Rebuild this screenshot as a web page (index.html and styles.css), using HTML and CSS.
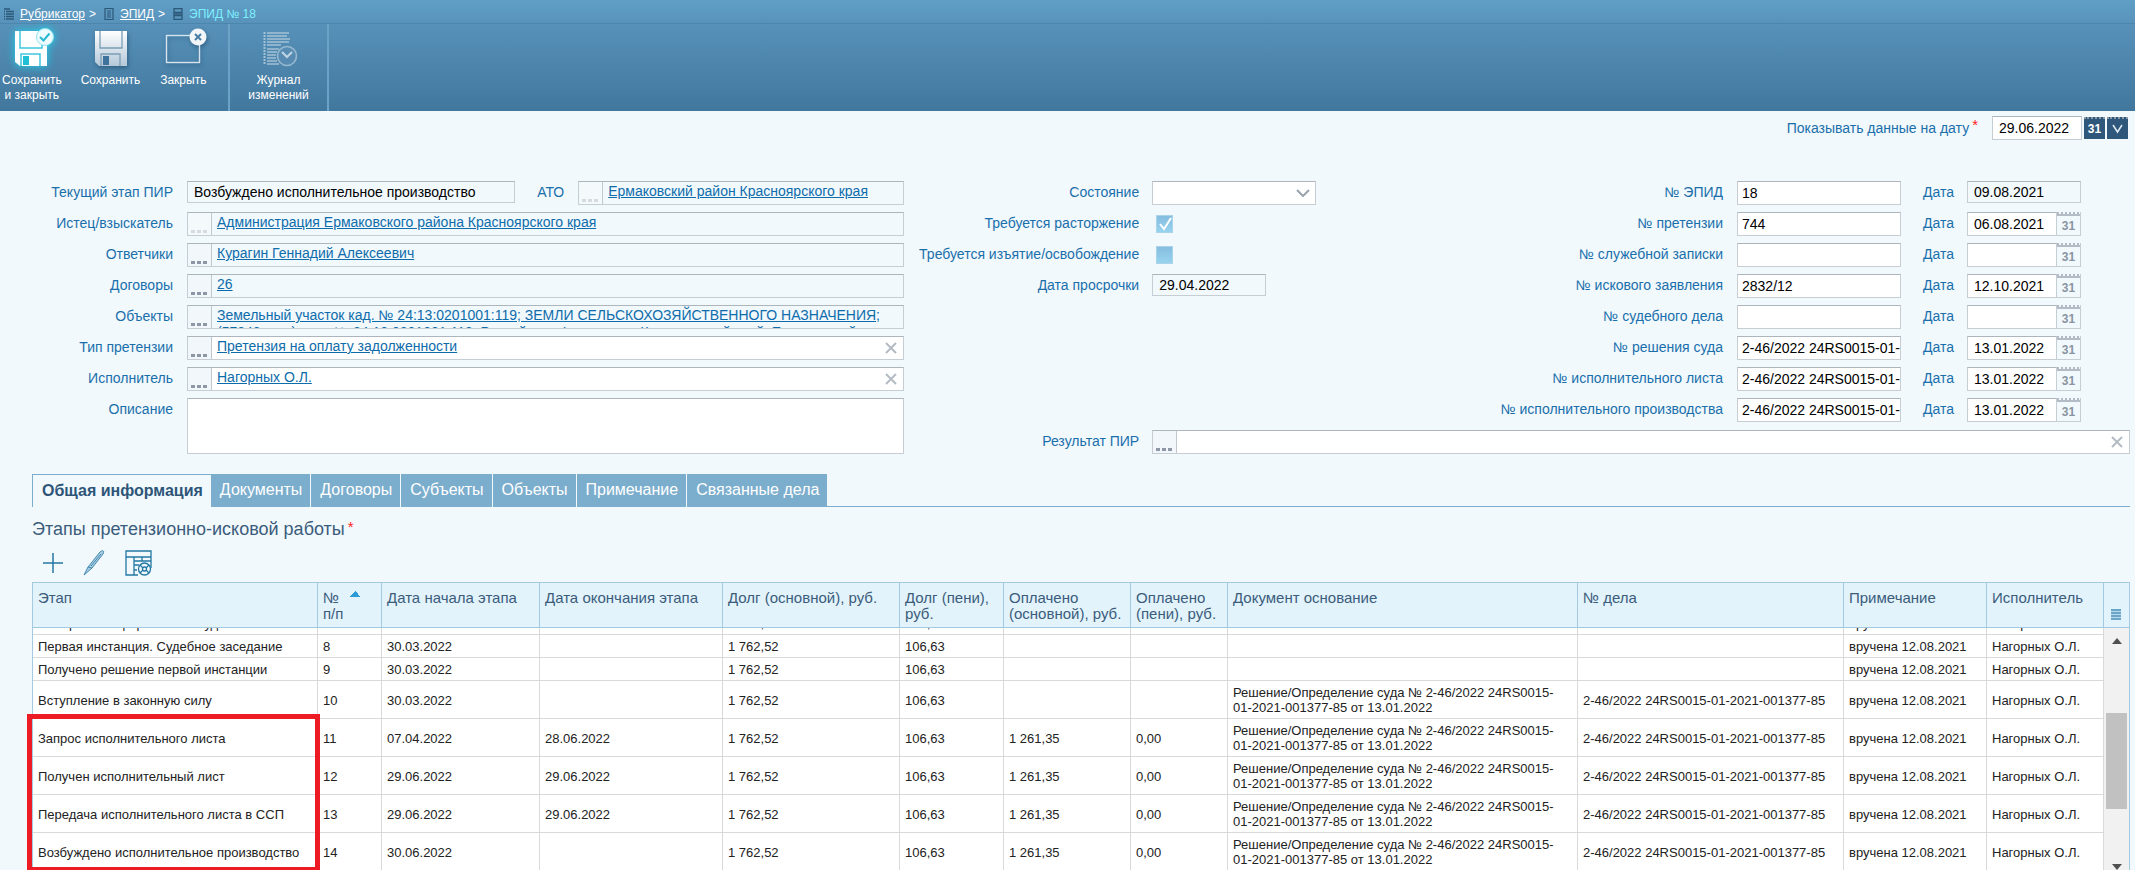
FILE: index.html
```html
<!DOCTYPE html>
<html lang="ru">
<head>
    <meta charset="UTF-8">
    <meta name="viewport" content="width=device-width, initial-scale=1.0">
    <title>ЭПИД № 18</title>
    <link rel="stylesheet" href="styles.css">
</head>
<body>
    <header class="header">
        <nav class="breadcrumbs">
            <svg width="10" height="12" viewBox="0 0 10 12"><path d="M0 1h6M2 3.5h8M2 6h8M2 8.5h8M2 11h8M0 3.5h1M0 6h1M0 8.5h1M0 11h1" stroke="#2c5878" stroke-width="1.4"/></svg>
            <a href="#">Рубрикатор</a><span class="sep">&gt;</span>
            <svg width="10" height="12" viewBox="0 0 10 12"><path d="M1 .5h8v11H1zM3 3h4M3 5h4M3 7h4M3 9h4" fill="none" stroke="#2c5878" stroke-width="1.2"/></svg>
            <a href="#">ЭПИД</a><span class="sep">&gt;</span>
            <svg width="10" height="12" viewBox="0 0 10 12"><path d="M1 .7h8v3.6H1zM0 6h10M1 7.7h8v3.6H1z" fill="none" stroke="#2c5878" stroke-width="1.3"/></svg>
            <span class="current">ЭПИД № 18</span>
        </nav>
        <div class="toolbar">
            <div class="tool-group">
                <button class="tool tool-glow">
                    <svg width="48" height="48" viewBox="0 0 48 48">
                        <path d="M7 6h32v35H12l-5-4z" fill="#fff"/>
                        <path d="M12 6v17h22V6" fill="none" stroke="#3fc6de" stroke-width="1.5"/>
                        <path d="M13 41V29h19v12" fill="none" stroke="#3fc6de" stroke-width="1.5"/>
                        <path d="M15 31h6v9h-6z" fill="#1fc0d4"/>
                        <circle cx="37" cy="12" r="8.5" fill="#eefbff" stroke="#8fe3f1"/>
                        <path d="M32 12l3.5 3.5 6-7" fill="none" stroke="#29b9d3" stroke-width="2"/>
                    </svg>
                    <span>Сохранить<br>и закрыть</span>
                </button>
                <button class="tool">
                    <svg width="48" height="48" viewBox="0 0 48 48">
                        <defs><linearGradient id="silver" x1="0" y1="0" x2="0" y2="1"><stop offset="0" stop-color="#fff"/><stop offset="1" stop-color="#b4c8d8"/></linearGradient></defs>
                        <path d="M9 6h32v35H13l-4-4z" fill="url(#silver)"/>
                        <path d="M14 6v17h22V6" fill="none" stroke="#7c9db6" stroke-width="1.3"/>
                        <path d="M15 41V29h19v12" fill="none" stroke="#7c9db6" stroke-width="1.3"/>
                        <path d="M17 31h6v9h-6z" fill="#3f729a"/>
                    </svg>
                    <span>Сохранить</span>
                </button>
                <button class="tool">
                    <svg width="48" height="48" viewBox="0 0 48 48">
                        <rect x="7.5" y="10.5" width="33" height="27" fill="none" stroke="#d5e4ee" stroke-width="1.4"/>
                        <circle cx="39" cy="12" r="8.5" fill="#f2f6f9"/>
                        <path d="M36 9l6 6M42 9l-6 6" stroke="#4a7da3" stroke-width="2"/>
                    </svg>
                    <span>Закрыть</span>
                </button>
            </div>
            <div class="tool-group">
                <button class="tool tool-flat">
                    <svg width="48" height="48" viewBox="0 0 48 48">
                        <path d="M12 8h22M12 11h20M12 14h23M12 17h22M12 20h14M12 24h12M12 27h10M12 30h9M12 33h9M12 36h10M12 39h12" stroke="#b9d0e0" stroke-width="1.4"/>
                        <path d="M9.5 7v33" stroke="#b9d0e0" stroke-width="2" stroke-dasharray="2 1"/>
                        <circle cx="32" cy="31" r="9.5" fill="#5a8db3" stroke="#a9c5d8" stroke-width="1.6"/>
                        <path d="M27 27l5 5 5-5" fill="none" stroke="#dbe8f0" stroke-width="2"/>
                    </svg>
                    <span>Журнал<br>изменений</span>
                </button>
            </div>
        </div>
    </header>

    <main>
        <div class="date-bar">
            <label for="onDate">Показывать данные на дату<sup>*</sup></label>
            <input id="onDate" class="input date-input" value="29.06.2022">
            <button class="dark-btn">31</button>
            <button class="dark-btn" aria-label="Применить"><svg width="11" height="10" viewBox="0 0 11 10"><path d="M1 1l4.5 7L10 1" fill="none" stroke="#dfeaf2" stroke-width="1.5"/></svg></button>
        </div>

        <form class="form">
            <div class="col col-left">
                <div class="row">
                    <label for="stage">Текущий этап ПИР</label>
                    <input id="stage" class="input readonly low grow" value="Возбуждено исполнительное производство" readonly>
                    <label class="ato-label" for="ato">АТО</label>
                    <div class="lookup readonly ato">
                        <button id="ato" type="button" class="dots" disabled></button>
                        <div class="value"><a href="#">Ермаковский район Красноярского края</a></div>
                    </div>
                </div>
                <div class="row">
                    <label for="plaintiff">Истец/взыскатель</label>
                    <div class="lookup readonly">
                        <button id="plaintiff" type="button" class="dots" disabled></button>
                        <div class="value"><a href="#">Администрация Ермаковского района Красноярского края</a></div>
                    </div>
                </div>
                <div class="row">
                    <label for="defendants">Ответчики</label>
                    <div class="lookup readonly">
                        <button id="defendants" type="button" class="dots"></button>
                        <div class="value"><a href="#">Курагин Геннадий Алексеевич</a></div>
                    </div>
                </div>
                <div class="row">
                    <label for="contracts">Договоры</label>
                    <div class="lookup readonly">
                        <button id="contracts" type="button" class="dots"></button>
                        <div class="value"><a href="#">26</a></div>
                    </div>
                </div>
                <div class="row">
                    <label for="objects">Объекты</label>
                    <div class="lookup readonly">
                        <button id="objects" type="button" class="dots"></button>
                        <div class="value"><a href="#">Земельный участок кад. № 24:13:0201001:119; ЗЕМЛИ СЕЛЬСКОХОЗЯЙСТВЕННОГО НАЗНАЧЕНИЯ;<br>(57843 кв.м); кад. № 24:13:0201001:119; Российская Федерация, Красноярский край, Ермаковский</a></div>
                    </div>
                </div>
                <div class="row">
                    <label for="claimType">Тип претензии</label>
                    <div class="lookup">
                        <button id="claimType" type="button" class="dots"></button>
                        <div class="value"><a href="#">Претензия на оплату задолженности</a></div>
                        <button type="button" class="clear" aria-label="Очистить"><svg width="12" height="12" viewBox="0 0 12 12"><path d="M1 1l10 10M11 1L1 11"/></svg></button>
                    </div>
                </div>
                <div class="row">
                    <label for="executor">Исполнитель</label>
                    <div class="lookup">
                        <button id="executor" type="button" class="dots"></button>
                        <div class="value"><a href="#">Нагорных О.Л.</a></div>
                        <button type="button" class="clear" aria-label="Очистить"><svg width="12" height="12" viewBox="0 0 12 12"><path d="M1 1l10 10M11 1L1 11"/></svg></button>
                    </div>
                </div>
                <div class="row">
                    <label for="description">Описание</label>
                    <textarea id="description" class="input grow"></textarea>
                </div>
            </div>

            <div class="col col-mid">
                <div class="row">
                    <label for="state">Состояние</label>
                    <select id="state" class="input number"><option></option></select>
                </div>
                <div class="row">
                    <label for="terminate">Требуется расторжение</label>
                    <input id="terminate" class="check" type="checkbox" checked>
                </div>
                <div class="row">
                    <label for="withdraw">Требуется изъятие/освобождение</label>
                    <input id="withdraw" class="check" type="checkbox">
                </div>
                <div class="row">
                    <label for="overdue">Дата просрочки</label>
                    <input id="overdue" class="input readonly low date-wide" value="29.04.2022" readonly>
                </div>
            </div>

            <div class="col col-right">
                <div class="row">
                    <label for="n1">№ ЭПИД</label>
                    <input id="n1" class="input number" value="18">
                    <label class="date-label" for="d1">Дата</label>
                    <input id="d1" class="input readonly low date-wide" value="09.08.2021" readonly>
                </div>
                <div class="row">
                    <label for="n2">№ претензии</label>
                    <input id="n2" class="input number" value="744">
                    <label class="date-label" for="d2">Дата</label>
                    <input id="d2" class="input date-input" value="06.08.2021"><button type="button" class="cal">31</button>
                </div>
                <div class="row">
                    <label for="n3">№ служебной записки</label>
                    <input id="n3" class="input number">
                    <label class="date-label" for="d3">Дата</label>
                    <input id="d3" class="input date-input"><button type="button" class="cal">31</button>
                </div>
                <div class="row">
                    <label for="n4">№ искового заявления</label>
                    <input id="n4" class="input number" value="2832/12">
                    <label class="date-label" for="d4">Дата</label>
                    <input id="d4" class="input date-input" value="12.10.2021"><button type="button" class="cal">31</button>
                </div>
                <div class="row">
                    <label for="n5">№ судебного дела</label>
                    <input id="n5" class="input number">
                    <label class="date-label" for="d5">Дата</label>
                    <input id="d5" class="input date-input"><button type="button" class="cal">31</button>
                </div>
                <div class="row">
                    <label for="n6">№ решения суда</label>
                    <input id="n6" class="input number" value="2-46/2022 24RS0015-01-2021-001377-85">
                    <label class="date-label" for="d6">Дата</label>
                    <input id="d6" class="input date-input" value="13.01.2022"><button type="button" class="cal">31</button>
                </div>
                <div class="row">
                    <label for="n7">№ исполнительного листа</label>
                    <input id="n7" class="input number" value="2-46/2022 24RS0015-01-2021-001377-85">
                    <label class="date-label" for="d7">Дата</label>
                    <input id="d7" class="input date-input" value="13.01.2022"><button type="button" class="cal">31</button>
                </div>
                <div class="row">
                    <label for="n8">№ исполнительного производства</label>
                    <input id="n8" class="input number" value="2-46/2022 24RS0015-01-2021-001377-85">
                    <label class="date-label" for="d8">Дата</label>
                    <input id="d8" class="input date-input" value="13.01.2022"><button type="button" class="cal">31</button>
                </div>
            </div>

            <div class="col col-result">
                <div class="row">
                    <label for="result">Результат ПИР</label>
                    <div class="lookup">
                        <button id="result" type="button" class="dots"></button>
                        <div class="value"></div>
                        <button type="button" class="clear" aria-label="Очистить"><svg width="12" height="12" viewBox="0 0 12 12"><path d="M1 1l10 10M11 1L1 11"/></svg></button>
                    </div>
                </div>
            </div>
        </form>

        <div class="tabs">
            <button class="tab active">Общая информация</button>
            <button class="tab">Документы</button>
            <button class="tab">Договоры</button>
            <button class="tab">Субъекты</button>
            <button class="tab">Объекты</button>
            <button class="tab">Примечание</button>
            <button class="tab">Связанные дела</button>
        </div>

        <h2>Этапы претензионно-исковой работы<sup>*</sup></h2>

        <div class="grid-tools">
            <button aria-label="Добавить"><svg width="20" height="28" viewBox="0 0 20 28"><path d="M10 4v20M0 14h20" stroke="#2477a3" stroke-width="1.5"/></svg></button>
            <button aria-label="Изменить"><svg width="22" height="28" viewBox="0 0 22 28"><path d="M1 26l4-8L17 3c2-2 5-2 3 2L9 19zM5 18l4 1M8 17L18 5" fill="#a9cde0" stroke="#4389b0" stroke-width="1"/></svg></button>
            <button aria-label="Настройка"><svg width="27" height="28" viewBox="0 0 27 28" fill="none" stroke="#2477a3" stroke-width="1.3"><path d="M13 26H1V2h25v17M1 8h25M9 8v18M17 8v4M9 12h17M9 16h5M9 21h3"/><circle cx="19.5" cy="20" r="6"/><circle cx="19.5" cy="20" r="2"/><path d="M15 16l3 3M24 16l-3 3M15 24l3-3M24 24l-3-3"/></svg></button>
        </div>

        <section class="grid">
            <div class="grid-head">
                <table>
                    <colgroup>
                        <col class="c1"><col class="c2"><col class="c3"><col class="c4"><col class="c5"><col class="c6"><col class="c7"><col class="c8"><col class="c9"><col class="c10"><col class="c11"><col class="c12">
                    </colgroup>
                    <thead>
                        <tr>
                            <th>Этап</th>
                            <th class="sorted">№<br>п/п</th>
                            <th>Дата начала этапа</th>
                            <th>Дата окончания этапа</th>
                            <th>Долг (основной), руб.</th>
                            <th>Долг (пени), руб.</th>
                            <th>Оплачено (основной), руб.</th>
                            <th>Оплачено (пени), руб.</th>
                            <th>Документ основание</th>
                            <th>№ дела</th>
                            <th>Примечание</th>
                            <th>Исполнитель</th>
                        </tr>
                    </thead>
                </table>
                <button class="grid-menu" aria-label="Столбцы"></button>
            </div>
            <div class="grid-body">
                <div class="scroller" id="scroller">
                    <table>
                        <colgroup>
                            <col class="c1"><col class="c2"><col class="c3"><col class="c4"><col class="c5"><col class="c6"><col class="c7"><col class="c8"><col class="c9"><col class="c10"><col class="c11"><col class="c12">
                        </colgroup>
                        <tbody>
                            <tr><td>Материалы оформлены в суд</td><td>7</td><td>30.03.2022</td><td></td><td>1 762,52</td><td>106,63</td><td></td><td></td><td></td><td></td><td>вручена 12.08.2021</td><td>Нагорных О.Л.</td></tr>
                            <tr><td>Первая инстанция. Судебное заседание</td><td>8</td><td>30.03.2022</td><td></td><td>1 762,52</td><td>106,63</td><td></td><td></td><td></td><td></td><td>вручена 12.08.2021</td><td>Нагорных О.Л.</td></tr>
                            <tr><td>Получено решение первой инстанции</td><td>9</td><td>30.03.2022</td><td></td><td>1 762,52</td><td>106,63</td><td></td><td></td><td></td><td></td><td>вручена 12.08.2021</td><td>Нагорных О.Л.</td></tr>
                            <tr><td>Вступление в законную силу</td><td>10</td><td>30.03.2022</td><td></td><td>1 762,52</td><td>106,63</td><td></td><td></td><td>Решение/Определение суда № 2-46/2022 24RS0015-01-2021-001377-85 от 13.01.2022</td><td>2-46/2022 24RS0015-01-2021-001377-85</td><td>вручена 12.08.2021</td><td>Нагорных О.Л.</td></tr>
                            <tr><td>Запрос исполнительного листа</td><td>11</td><td>07.04.2022</td><td>28.06.2022</td><td>1 762,52</td><td>106,63</td><td>1 261,35</td><td>0,00</td><td>Решение/Определение суда № 2-46/2022 24RS0015-01-2021-001377-85 от 13.01.2022</td><td>2-46/2022 24RS0015-01-2021-001377-85</td><td>вручена 12.08.2021</td><td>Нагорных О.Л.</td></tr>
                            <tr><td>Получен исполнительный лист</td><td>12</td><td>29.06.2022</td><td>29.06.2022</td><td>1 762,52</td><td>106,63</td><td>1 261,35</td><td>0,00</td><td>Решение/Определение суда № 2-46/2022 24RS0015-01-2021-001377-85 от 13.01.2022</td><td>2-46/2022 24RS0015-01-2021-001377-85</td><td>вручена 12.08.2021</td><td>Нагорных О.Л.</td></tr>
                            <tr><td>Передача исполнительного листа в ССП</td><td>13</td><td>29.06.2022</td><td>29.06.2022</td><td>1 762,52</td><td>106,63</td><td>1 261,35</td><td>0,00</td><td>Решение/Определение суда № 2-46/2022 24RS0015-01-2021-001377-85 от 13.01.2022</td><td>2-46/2022 24RS0015-01-2021-001377-85</td><td>вручена 12.08.2021</td><td>Нагорных О.Л.</td></tr>
                            <tr><td>Возбуждено исполнительное производство</td><td>14</td><td>30.06.2022</td><td></td><td>1 762,52</td><td>106,63</td><td>1 261,35</td><td>0,00</td><td>Решение/Определение суда № 2-46/2022 24RS0015-01-2021-001377-85 от 13.01.2022</td><td>2-46/2022 24RS0015-01-2021-001377-85</td><td>вручена 12.08.2021</td><td>Нагорных О.Л.</td></tr>
                        </tbody>
                    </table>
                </div>
                <div class="scrollbar">
                    <span class="arrow-up"></span>
                    <span class="thumb"></span>
                    <span class="arrow-down"></span>
                </div>
            </div>
            <div class="highlight"></div>
        </section>
    </main>

    <script>
        document.getElementById('scroller').scrollTop = 16;
    </script>
</body>
</html>
```
FILE: styles.css
```css
* {
    box-sizing: border-box;
}

body {
    margin: 0;
    height: 100vh;
    display: flex;
    flex-direction: column;
    overflow: hidden;
    background: #f1f9fd;
    font-family: "Liberation Sans", Arial, sans-serif;
    font-size: 14px;
    color: #222;
}

button, input, select, textarea {
    font-family: inherit;
    font-size: inherit;
    margin: 0;
}

button {
    border: none;
    background: none;
    padding: 0;
    cursor: pointer;
}

a {
    color: #0e6cab;
}

sup {
    color: #f22;
    margin-left: 3px;
    font-size: 15px;
    line-height: 0;
    vertical-align: 3px;
}

/* header */

.header {
    flex: none;
    height: 111px;
    background: linear-gradient(#619fc7, #5690b8 25%, #41779d);
    color: #fff;
    font-size: 12px;
}

.breadcrumbs {
    display: flex;
    align-items: center;
    height: 24px;
    padding: 4px 4px 0;
    border-bottom: 1px solid #4d86ad;
}

.breadcrumbs a {
    color: #fff;
    margin-left: 6px;
}

.breadcrumbs .sep {
    margin: 0 8px 0 4px;
}

.breadcrumbs .current {
    color: #7df0ff;
    margin-left: 6px;
}

.toolbar {
    display: flex;
    height: 87px;
}

.tool-group {
    display: flex;
    align-items: flex-start;
    gap: 19px;
    padding: 1px 21px 0 2px;
    border-right: 2px solid #6aa3c6;
}

.tool-group + .tool-group {
    padding: 1px 18px 0;
}

.tool {
    display: flex;
    flex-direction: column;
    align-items: center;
    color: #fff;
    line-height: 15px;
}

.tool svg {
    filter: drop-shadow(1px 2px 2px rgba(20, 60, 90, 0.5));
}

.tool-glow svg {
    filter: drop-shadow(0 0 4px #19d7ee);
}

.tool-flat svg {
    filter: none;
    opacity: 0.8;
}

/* form */

main {
    flex: 1;
    min-height: 0;
    display: flex;
    flex-direction: column;
    padding-right: 5px;
}

label {
    color: #1a6fab;
    white-space: nowrap;
}

.date-bar {
    display: flex;
    justify-content: flex-end;
    padding: 5px 2px 0 0;
    height: 70px;
}

.date-bar label {
    margin-right: 14px;
    line-height: 24px;
}

.date-bar .date-input {
    width: 90px;
}

.dark-btn {
    width: 21px;
    height: 22px;
    margin: 1px 0 0 2px;
    display: flex;
    align-items: center;
    justify-content: center;
    border-top: 2px dotted #8d99a6;
    background: #2f577c;
    color: #fff;
    font-size: 12px;
    font-weight: bold;
}

.form {
    display: grid;
    grid-template-columns: minmax(0, 10fr) 412px minmax(0, 9fr);
    row-gap: 7px;
}

.col {
    display: flex;
    flex-direction: column;
    gap: 7px;
}

.col-left {
    grid-row: span 2;
}

.col-right {
    padding-right: 49px;
}

.col-result {
    grid-column: 2 / 4;
}

.row {
    display: flex;
    align-items: flex-start;
    min-height: 24px;
}

.row > label:first-child {
    text-align: right;
    line-height: 22px;
    margin-right: 14px;
}

.col-left .row > label:first-child {
    width: 173px;
}

.col-mid .row > label:first-child,
.col-result .row > label:first-child {
    width: 235px;
    margin-right: 13px;
}

.col-right .row > label:first-child {
    flex: 1;
}

.input {
    height: 24px;
    padding: 0 6px;
    border: 1px solid #c6ced4;
    border-top-color: #adb6bc;
    border-radius: 0;
    background: #fff;
    color: #000;
    outline: none;
}

.low {
    height: 22px;
}

.readonly {
    background: #f1f9fd;
}

.grow {
    flex: 1;
    min-width: 0;
}

textarea.input {
    height: 56px;
    resize: none;
}

.number {
    width: 164px;
    padding: 0 0 0 4px;
}

.date-wide {
    width: 114px;
}

.date-input {
    width: 90px;
}

select.input {
    appearance: none;
    background: #fff url("data:image/svg+xml,%3Csvg xmlns='http://www.w3.org/2000/svg' width='14' height='8'%3E%3Cpath d='M1 1l6 6 6-6' fill='none' stroke='%239aa3ad' stroke-width='2'/%3E%3C/svg%3E") no-repeat right 5px center;
}

.date-label {
    width: 30px;
    margin: 0 14px 0 22px;
    line-height: 22px;
}

.ato-label {
    margin: 0 14px 0 22px;
    line-height: 22px;
}

.ato.lookup {
    flex: none;
    width: 326px;
}

.lookup {
    display: flex;
    flex: 1;
    min-width: 0;
    height: 24px;
    border: 1px solid #c6ced4;
    border-top-color: #adb6bc;
    background: #fff;
}

.lookup.readonly {
    background: #f1f9fd;
}

.lookup .value {
    flex: 1;
    min-width: 0;
    padding: 1px 6px 0 5px;
    line-height: 17px;
    overflow: hidden;
    white-space: nowrap;
}

/* three square dots */
.dots {
    flex: none;
    width: 24px;
    border-right: 1px solid #c0c8ce;
    background: repeating-linear-gradient(90deg, #8d97a5 0 4px, transparent 4px 6px) no-repeat 3px 17px / 16px 3px #f1f7fa;
}

.dots:disabled {
    background: repeating-linear-gradient(90deg, #d5dbe0 0 4px, transparent 4px 6px) no-repeat 3px 17px / 16px 3px #f4fafc;
}

.clear {
    flex: none;
    width: 24px;
    display: flex;
    align-items: center;
    justify-content: center;
    stroke: #b4bbc3;
    stroke-width: 2px;
}

.check {
    appearance: none;
    width: 17px;
    height: 18px;
    margin: 3px 0 0 4px;
    border: 1px solid #a9d4ea;
    background: linear-gradient(#85bde0, #97d3ee);
}

.check:checked {
    background: url("data:image/svg+xml,%3Csvg xmlns='http://www.w3.org/2000/svg' width='15' height='16'%3E%3Cpath d='M3 8l4 5 7-11' fill='none' stroke='%23fff' stroke-width='2'/%3E%3C/svg%3E") no-repeat, linear-gradient(#85bde0, #97d3ee);
}

.cal {
    width: 24px;
    height: 24px;
    padding-top: 5px;
    border: 1px solid #c6ced4;
    border-left: none;
    border-top: none;
    background: linear-gradient(#b3bbc4, #b3bbc4) no-repeat 0 2px / 100% 2px, repeating-linear-gradient(90deg, #b3bbc4 0 2px, transparent 2px 4px) no-repeat 0 0 / 100% 2px;
    color: #8a94a1;
    font-size: 12px;
    font-weight: bold;
}

/* tabs */

.tabs {
    display: flex;
    flex: none;
    height: 33px;
    margin: 20px 0 0 32px;
    background: linear-gradient(#7badcd, #7badcd) no-repeat bottom / 100% 1px;
}

.tab {
    padding: 0 8px 1px 9px;
    background: #7badcd;
    color: #fff;
    font-size: 16px;
    border-right: 1px solid #f1f9fd;
}

.tab:last-child {
    border-right: none;
}

.tab.active {
    padding: 0 8px 0 9px;
    background: #f1f9fd;
    border: 1px solid #7badcd;
    border-width: 1px 0 0 1px;
    color: #2d5578;
    font-weight: bold;
}

h2 {
    margin: 12px 0 0 32px;
    font-size: 18px;
    font-weight: normal;
    line-height: 20px;
    color: #3b5c7b;
}

.grid-tools {
    display: flex;
    flex: none;
    gap: 20px;
    height: 43px;
    padding: 10px 0 0 43px;
}

.grid-tools button {
    height: 28px;
}

/* stages table */

.grid {
    position: relative;
    flex: 1;
    min-height: 0;
    display: flex;
    flex-direction: column;
    margin-left: 32px;
    border: 1px solid #a3cae0;
    border-bottom: none;
}

.grid-head {
    display: flex;
    flex: none;
    height: 45px;
    background: #e2f3fb;
    border-bottom: 1px solid #a3cae0;
}

.grid-body {
    display: flex;
    flex: 1;
    min-height: 0;
}

.scroller {
    flex: 1;
    overflow: hidden;
    background: #fff;
}

table {
    width: 100%;
    table-layout: fixed;
    border-collapse: separate;
    border-spacing: 0;
}

.grid-head table {
    flex: 1;
    height: 44px;
}

th {
    padding: 7px 0 0 5px;
    border-right: 1px solid #a3cae0;
    font-size: 15px;
    font-weight: normal;
    line-height: 16px;
    text-align: left;
    vertical-align: top;
    color: #3b5c7b;
}

.sorted {
    background: conic-gradient(from 135deg at 50% 0, #2b9bd8 90deg, transparent 0) no-repeat 32px 8px / 10px 6px;
}

td {
    height: 23px;
    padding: 4px 10px 3px 5px;
    border-right: 1px solid #d9d9d9;
    border-bottom: 1px solid #d9d9d9;
    font-size: 13px;
    line-height: 15px;
}

.c1 { width: 285px; }
.c2 { width: 64px; }
.c3 { width: 158px; }
.c4 { width: 183px; }
.c5 { width: 177px; }
.c6 { width: 104px; }
.c7 { width: 127px; }
.c8 { width: 97px; }
.c9 { width: 350px; }
.c10 { width: 266px; }
.c11 { width: 143px; }
.c12 { width: 117px; }

.grid-menu {
    width: 25px;
    background: repeating-linear-gradient(#6ba5c8 0 2px, #b5d8ea 2px 3px) no-repeat 7px 26px / 10px 11px;
}

.scrollbar {
    flex: none;
    width: 25px;
    display: flex;
    flex-direction: column;
    align-items: center;
    padding-top: 10px;
    background: #f1f1f1;
}

.arrow-up,
.arrow-down {
    border: 5px solid transparent;
    border-top: none;
    border-bottom: 6px solid #505050;
}

.arrow-down {
    margin-top: auto;
    border-top: 6px solid #505050;
    border-bottom: none;
}

.thumb {
    width: 21px;
    height: 96px;
    margin-top: 69px;
    background: #c1c1c1;
}

/* red frame over the last stages */
.highlight {
    position: absolute;
    top: 131px;
    left: -6px;
    bottom: -2px;
    width: 14%;
    border: 5px solid #ed1c24;
    pointer-events: none;
}
```
